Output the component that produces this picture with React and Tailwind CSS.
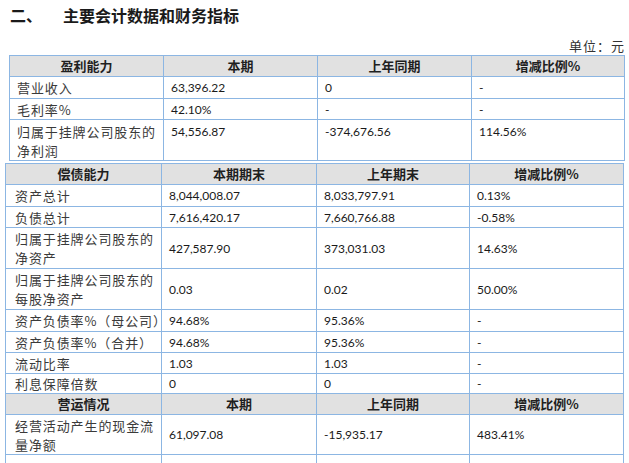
import React from "react";

const cjk = "font-['Noto_Sans_CJK_SC',sans-serif]";
const num = "font-['Lato','Noto_Sans_CJK_SC',sans-serif]";

const profit = [
  { label: ["营业收入"], cur: "63,396.22", prev: "0", pct: "-", h: "h-[22px]" },
  { label: ["毛利率%"], cur: "42.10%", prev: "-", pct: "-", h: "h-[21px]" },
  { label: ["归属于挂牌公司股东的", "净利润"], cur: "54,556.87", prev: "-374,676.56", pct: "114.56%", h: "h-[40px]", top: true },
];

const debt = [
  { label: ["资产总计"], cur: "8,044,008.07", prev: "8,033,797.91", pct: "0.13%", h: "h-[22px]" },
  { label: ["负债总计"], cur: "7,616,420.17", prev: "7,660,766.88", pct: "-0.58%", h: "h-[21px]" },
  { label: ["归属于挂牌公司股东的", "净资产"], cur: "427,587.90", prev: "373,031.03", pct: "14.63%", h: "h-[41px]" },
  { label: ["归属于挂牌公司股东的", "每股净资产"], cur: "0.03", prev: "0.02", pct: "50.00%", h: "h-[41px]" },
  { label: ["资产负债率%（母公司）"], cur: "94.68%", prev: "95.36%", pct: "-", h: "h-[22px]" },
  { label: ["资产负债率%（合并）"], cur: "94.68%", prev: "95.36%", pct: "-", h: "h-[21px]" },
  { label: ["流动比率"], cur: "1.03", prev: "1.03", pct: "-", h: "h-[21px]" },
  { label: ["利息保障倍数"], cur: "0", prev: "0", pct: "-", h: "h-[20px]" },
];

const ops = [
  { label: ["经营活动产生的现金流", "量净额"], cur: "61,097.08", prev: "-15,935.17", pct: "483.41%", h: "h-[40px]" },
];

const td = "border border-[#8cb6e3] px-[7px] p-0";

function Head({ cols }) {
  return (
    <tr className="h-[21px] bg-[#e1e1e1]">
      {cols.map((c, i) => (
        <th
          key={i}
          className={`border border-[#8cb6e3] p-0 text-center text-[13px] leading-[18px] font-bold text-[#1f1f1f] ${cjk}`}
        >
          {c}
        </th>
      ))}
    </tr>
  );
}

function Row({ r, first = "pl-[9px]" }) {
  const va = r.top ? "align-top pt-[2px]" : "align-middle";
  return (
    <tr className={r.h}>
      <td className={`${td} ${first} ${va} text-[13px] leading-[19px] tracking-[0.9px] text-[#3a3a3a] ${cjk}`}>
        {r.label.map((l, i) => (
          <div key={i} className="whitespace-nowrap">{l}</div>
        ))}
      </td>
      {[r.cur, r.prev, r.pct].map((v, i) => (
        <td key={i} className={`${td} ${va} text-[12px] leading-[19px] text-[#1a1a1a] ${num}`}>
          {v}
        </td>
      ))}
    </tr>
  );
}

export default function App() {
  return (
    <div className="w-[629px] h-[463px] overflow-hidden bg-white">
      <div className={`h-[30px] flex items-center text-[16px] font-bold text-[#1a1a1a] ${cjk}`}>
        <span className="pl-[10px] w-[63px]">二、</span>
        <span>主要会计数据和财务指标</span>
      </div>
      <div className={`h-[25px] pt-[8px] pr-[4px] text-right text-[13px] leading-[16px] tracking-[1px] text-[#333] ${cjk}`}>
        单位：元
      </div>

      <table className="ml-[9px] w-[615px] table-fixed border-collapse">
        <colgroup>
          <col className="w-[154px]" />
          <col className="w-[154px]" />
          <col className="w-[154px]" />
          <col className="w-[153px]" />
        </colgroup>
        <tbody>
          <Head cols={["盈利能力", "本期", "上年同期", "增减比例%"]} />
          {profit.map((r, i) => (
            <Row key={i} r={r} first="pl-[7px]" />
          ))}
        </tbody>
      </table>

      <table className="ml-[5px] mt-[2px] w-[618px] table-fixed border-collapse">
        <colgroup>
          <col className="w-[156px]" />
          <col className="w-[155px]" />
          <col className="w-[153px]" />
          <col className="w-[154px]" />
        </colgroup>
        <tbody>
          <Head cols={["偿债能力", "本期期末", "上年期末", "增减比例%"]} />
          {debt.map((r, i) => (
            <Row key={i} r={r} />
          ))}
          <Head cols={["营运情况", "本期", "上年同期", "增减比例%"]} />
          {ops.map((r, i) => (
            <Row key={i} r={r} />
          ))}
          <tr className="h-[21px]">
            <td className={td}></td>
            <td className={td}></td>
            <td className={td}></td>
            <td className={td}></td>
          </tr>
        </tbody>
      </table>
    </div>
  );
}
